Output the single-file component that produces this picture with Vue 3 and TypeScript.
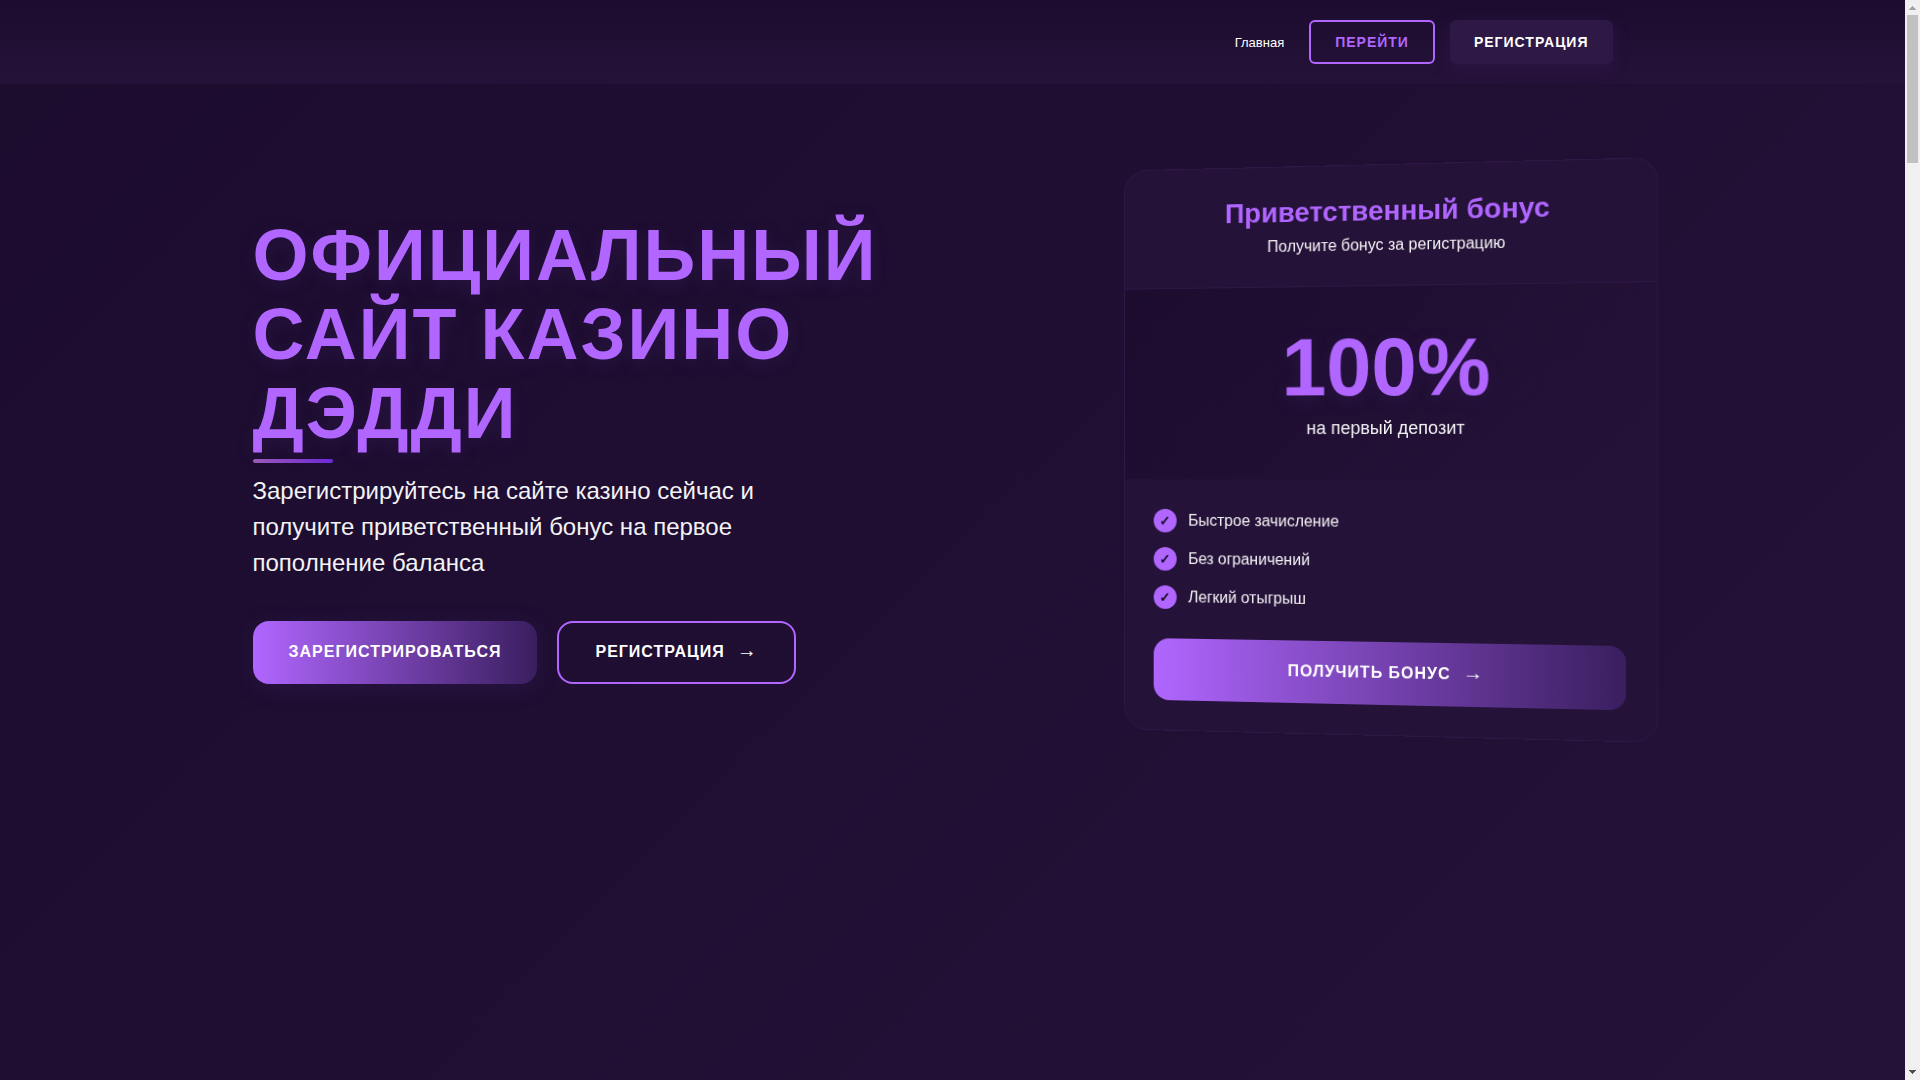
<script setup lang="ts">
const perks: string[] = ['Быстрое зачисление', 'Без ограничений', 'Легкий отыгрыш']
</script>

<template>
  <div class="window">
    <div class="page">
      <header class="header">
        <nav class="nav">
          <a class="nav-link" href="#">Главная</a>
          <div class="nav-actions">
            <button class="nav-btn outline" type="button">Перейти</button>
            <button class="nav-btn solid" type="button">Регистрация</button>
          </div>
        </nav>
      </header>

      <main class="hero">
        <div class="hero-inner">
          <section class="intro">
            <h1 class="title">Официальный сайт казино Дэдди</h1>
            <p class="lead">
              Зарегистрируйтесь на сайте казино сейчас и получите приветственный бонус на первое
              пополнение баланса
            </p>
            <div class="actions">
              <button class="btn primary" type="button">Зарегистрироваться</button>
              <button class="btn ghost" type="button">
                <span>Регистрация</span><span class="arrow">→</span>
              </button>
            </div>
          </section>

          <section class="card">
            <div class="card-head">
              <h2 class="card-title">Приветственный бонус</h2>
              <p class="card-sub">Получите бонус за регистрацию</p>
            </div>
            <div class="card-amount">
              <div class="amount">100%</div>
              <div class="amount-note">на первый депозит</div>
            </div>
            <div class="card-body">
              <ul class="perks">
                <li v-for="perk in perks" :key="perk" class="perk">
                  <span class="check">✓</span>
                  <span>{{ perk }}</span>
                </li>
              </ul>
              <button class="btn primary wide" type="button">
                <span>Получить бонус</span><span class="arrow">→</span>
              </button>
            </div>
          </section>
        </div>
      </main>
    </div>

    <div class="scrollbar" aria-hidden="true">
      <svg class="scroll-arrow" viewBox="0 0 15 15" shape-rendering="crispEdges">
        <path d="M7 6h1v1h1v1h1v1h1v1h-7v-1h1v-1h1v-1h1z" fill="#a3a3a3" />
      </svg>
      <div class="thumb"></div>
      <svg class="scroll-arrow end" viewBox="0 0 15 15" shape-rendering="crispEdges">
        <path d="M4 5h7v1h-1v1h-1v1h-1v1h-1v-1h-1v-1h-1v-1h-1z" fill="#505050" />
      </svg>
    </div>
  </div>
</template>

<style>
body {
  margin: 0;
  background: #1c0c2e;
}
</style>

<style scoped>
* {
  box-sizing: border-box;
}

.window {
  display: flex;
  min-height: 100vh;
  font-family: 'Liberation Sans', Arial, sans-serif;
  font-size: 16px;
  line-height: 24px;
  color: #fff;
}

.page {
  display: flex;
  flex: 1;
  flex-direction: column;
  min-width: 0;
}

.header {
  background: linear-gradient(180deg, #1c0c2e 0%, #251239 100%);
}

.nav {
  display: flex;
  align-items: baseline;
  justify-content: flex-end;
  gap: 25px;
  max-width: 1400px;
  margin: 0 auto;
  padding: 20px 40px;
}

.nav-link {
  color: #fff;
  font-size: 13px;
  text-decoration: none;
}

.nav-actions {
  display: flex;
  gap: 15px;
}

.nav-btn {
  height: 44px;
  padding: 0 24px;
  border: 0;
  border-radius: 6px;
  font-family: inherit;
  font-size: 14px;
  font-weight: 700;
  letter-spacing: 1px;
  text-transform: uppercase;
  color: #fff;
  cursor: pointer;
}

.nav-btn.outline {
  border: 2px solid #b066ff;
  background: transparent;
  color: #b066ff;
}

.nav-btn.solid {
  background: #2d1846;
  box-shadow: 0 4px 15px rgba(58, 30, 95, 0.4);
}

.hero {
  flex: 1;
  background: linear-gradient(135deg, #1c0c2e 0%, #241238 100%);
}

.hero-inner {
  display: grid;
  grid-template-columns: 3fr 2fr;
  gap: 60px;
  align-items: center;
  max-width: 1400px;
  margin: 0 auto;
  padding: 80px 0;
}

.title {
  position: relative;
  margin: 0 0 20px;
  font-size: 72px;
  font-weight: 700;
  line-height: 79px;
  letter-spacing: 2px;
  text-transform: uppercase;
  color: #b066ff;
  text-shadow: 0 4px 15px rgba(58, 30, 95, 0.4);
}

.title::after {
  content: '';
  position: absolute;
  left: 0;
  bottom: -10px;
  width: 80px;
  height: 4px;
  border-radius: 2px;
  background: linear-gradient(90deg, #9b59b6, #6d28d9);
}

.lead {
  max-width: 550px;
  margin: 0 0 40px;
  font-size: 24px;
  line-height: 36px;
  opacity: 0.95;
}

.actions {
  display: flex;
  gap: 20px;
}

.btn {
  display: flex;
  align-items: baseline;
  justify-content: center;
  gap: 12px;
  height: 63px;
  padding: 19px 36px;
  border: 0;
  border-radius: 16px;
  font-family: inherit;
  font-size: 16px;
  font-weight: 700;
  line-height: 24px;
  letter-spacing: 1px;
  text-transform: uppercase;
  color: #fff;
  cursor: pointer;
}

.btn.primary {
  background: linear-gradient(90deg, #b066ff, #3a1e5f);
  box-shadow: 0 4px 20px rgba(58, 30, 95, 0.4);
}

.btn.ghost {
  padding: 17px 36px;
  border: 2px solid #b066ff;
  background: transparent;
}

.btn.wide {
  width: 100%;
  box-shadow: none;
}

.arrow {
  font-size: 20px;
  line-height: 20px;
}

.card {
  overflow: hidden;
  border: 1px solid #2d1846;
  border-radius: 24px;
  background: #251239;
  transform: perspective(1000px) rotateY(-5deg);
}

.card-head {
  padding: 30px;
  border-bottom: 1px solid #2d1846;
  text-align: center;
}

.card-title {
  margin: 0 0 9px;
  font-size: 28px;
  line-height: 31px;
  color: #b066ff;
}

.card-sub {
  margin: 0;
  line-height: 20px;
  opacity: 0.95;
}

.card-amount {
  padding: 40px 30px;
  background: linear-gradient(135deg, #1c0c2e 0%, #251239 100%);
  text-align: center;
}

.amount {
  margin-bottom: 8px;
  font-size: 82px;
  font-weight: 700;
  line-height: 82px;
  color: #b066ff;
  text-shadow: 0 4px 15px rgba(58, 30, 95, 0.4);
}

.amount-note {
  font-size: 18px;
  line-height: 24px;
  opacity: 0.95;
}

.card-body {
  padding: 30px;
}

.perks {
  display: grid;
  gap: 15px;
  margin: 0 0 30px;
  padding: 0;
  list-style: none;
}

.perk {
  display: flex;
  align-items: center;
  gap: 12px;
}

.perk > span:last-child {
  opacity: 0.95;
}

.check {
  display: flex;
  align-items: center;
  justify-content: center;
  width: 24px;
  height: 24px;
  border-radius: 50%;
  background: #b066ff;
  font-size: 14px;
  font-weight: 700;
  color: #1c0c2e;
}

.scrollbar {
  display: flex;
  flex-direction: column;
  align-items: center;
  flex: 0 0 15px;
  background: #f0f0f0;
}

.scroll-arrow {
  display: block;
  width: 15px;
  height: 15px;
}

.scroll-arrow.end {
  margin-top: auto;
}

.thumb {
  width: 11px;
  height: 148px;
  background: #c1c1c1;
}
</style>
